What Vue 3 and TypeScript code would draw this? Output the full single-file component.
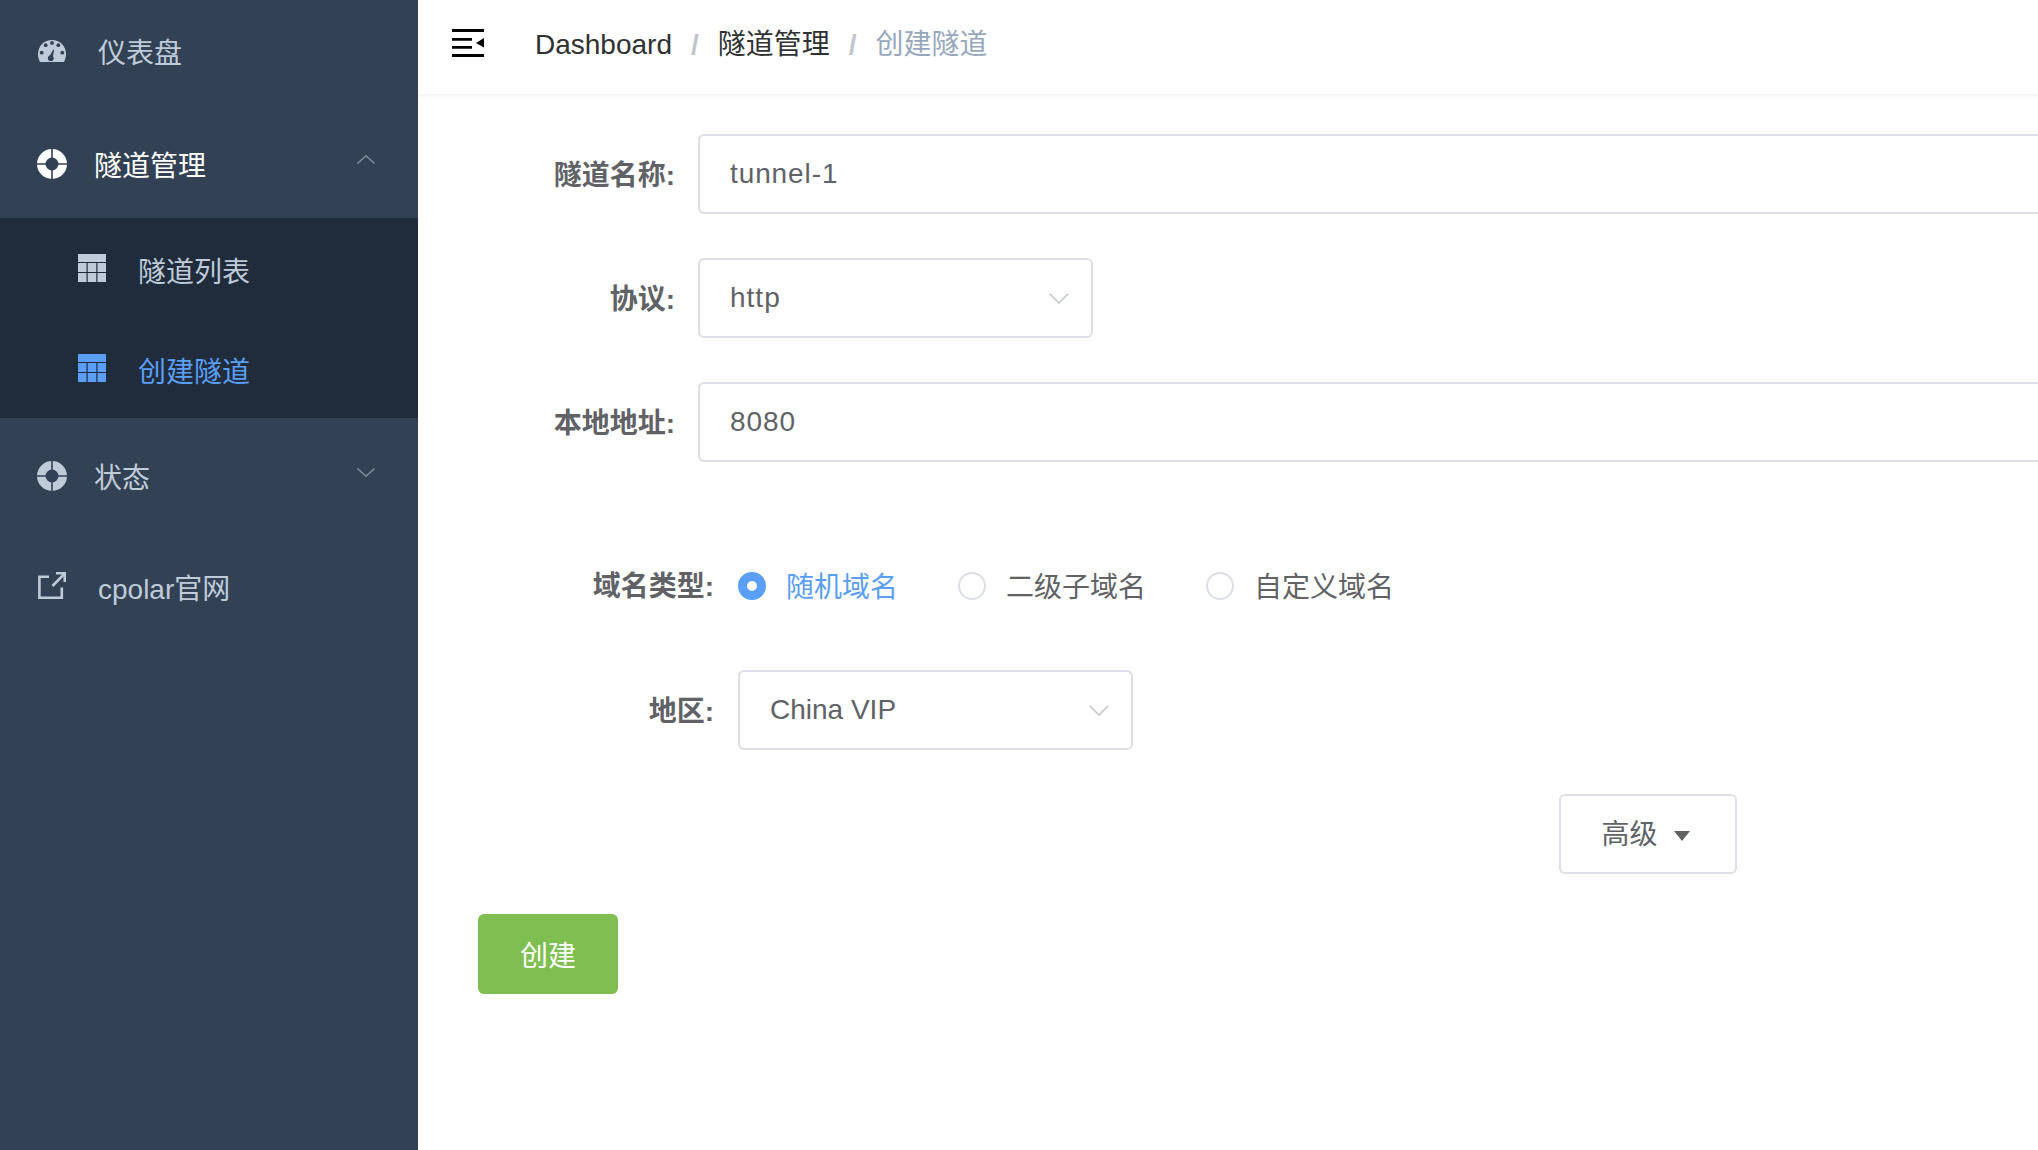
<script setup lang="ts">
import { ref } from 'vue'

const name = ref('tunnel-1')
const port = ref('8080')
const domainType = ref('随机域名')
const domainTypes = ['随机域名', '二级子域名', '自定义域名']
</script>

<template>
  <div class="layout">
    <aside class="sidebar">
      <div class="menu-item first">
        <svg class="icon dash" viewBox="0 0 28 22">
          <path fill="#bfcbd9" d="M14 0C6.300 0 0 6.200 0 13.900c0 2.900.8 5.700 2 8.100h24c1.200-2.400 2-5.200 2-8.100C28 6.200 21.700 0 14 0z"/>
          <g fill="#334155">
            <circle cx="3.700" cy="12.700" r="1.900"/><circle cx="7.700" cy="5.200" r="1.900"/><circle cx="14" cy="2.900" r="1.900"/><circle cx="20.300" cy="5.200" r="1.900"/><circle cx="24.300" cy="12.700" r="1.900"/>
            <circle cx="12.800" cy="18.200" r="2.900"/><path d="M11.300 16.800 15.200 9.500l.9.3-1.400 8.200z"/>
          </g>
        </svg>
        <span class="menu-text">仪表盘</span>
      </div>
      <div class="menu-item open">
        <svg class="icon buoy" viewBox="0 0 30 30"><path fill="#fff" fill-rule="evenodd" d="M15 0a15 15 0 1 1 0 30 15 15 0 0 1 0-30zm0 8.500a6.500 6.500 0 1 0 0 13 6.500 6.500 0 0 0 0-13z"/><path stroke="#334155" stroke-width="1.600" d="M15 0v9M15 21v9M0 15h9M21 15h9"/></svg>
        <span class="menu-text sub-title">隧道管理</span>
        <svg class="chevron" viewBox="0 0 18 9"><path fill="none" stroke="#8492a3" stroke-width="1.400" d="M.5 8.500 9 .8l8.500 7.700"/></svg>
      </div>
      <div class="submenu">
        <div class="sub-item">
          <svg class="sub-icon" viewBox="0 0 28 28"><path fill="#bfcbd9" d="M0 0h28v8H0zM0 9h8.500v9H0zM9.700 9h8.600v9H9.700zM19.500 9H28v9h-8.500zM0 19h8.500v9H0zM9.700 19h8.600v9H9.700zM19.500 19H28v9h-8.500z"/></svg>
          <span class="sub-text">隧道列表</span>
        </div>
        <div class="sub-item active">
          <svg class="sub-icon" viewBox="0 0 28 28"><path fill="#5a9ef5" d="M0 0h28v8H0zM0 9h8.500v9H0zM9.700 9h8.600v9H9.700zM19.500 9H28v9h-8.500zM0 19h8.500v9H0zM9.700 19h8.600v9H9.700zM19.500 19H28v9h-8.500z"/></svg>
          <span class="sub-text">创建隧道</span>
        </div>
      </div>
      <div class="menu-item tall">
        <svg class="icon buoy" viewBox="0 0 30 30"><path fill="#bfcbd9" fill-rule="evenodd" d="M15 0a15 15 0 1 1 0 30 15 15 0 0 1 0-30zm0 8.500a6.500 6.500 0 1 0 0 13 6.500 6.500 0 0 0 0-13z"/><path stroke="#334155" stroke-width="1.600" d="M15 0v9M15 21v9M0 15h9M21 15h9"/></svg>
        <span class="menu-text sub-title">状态</span>
        <svg class="chevron down" viewBox="0 0 18 9"><path fill="none" stroke="#8492a3" stroke-width="1.400" d="M.5.500 9 8.200 17.500.5"/></svg>
      </div>
      <div class="menu-item tall">
        <svg class="icon link" viewBox="0 0 28 28">
          <path fill="none" stroke="#bfcbd9" stroke-width="2.600" d="M11 4.700H1.400v21h22.400V15.500"/>
          <path fill="none" stroke="#bfcbd9" stroke-width="2.600" d="M14.500 14 26 2.200"/>
          <path fill="#bfcbd9" d="M18 0h10v10h-2.600V2.600H18z"/>
        </svg>
        <span class="menu-text cpolar">cpolar官网</span>
      </div>
    </aside>

    <main class="main">
      <header class="navbar">
        <svg class="hamburger" viewBox="0 0 32 28">
          <path fill="#000" d="M0 0h32v3H0zM0 9h20v2.700H0zM0 17h20v2.700H0zM0 25h32v3H0zM32 9v9.500L24 14z"/>
        </svg>
        <nav class="crumbs">
          <span class="crumb">Dashboard</span>
          <span class="sep">/</span>
          <span class="crumb">隧道管理</span>
          <span class="sep">/</span>
          <span class="crumb current">创建隧道</span>
        </nav>
      </header>

      <form class="form" @submit.prevent>
        <div class="row">
          <label class="label">隧道名称:</label>
          <input v-model="name" class="input wide" />
        </div>
        <div class="row">
          <label class="label">协议:</label>
          <div class="input select">
            <span class="spaced">http</span>
            <svg class="caret" viewBox="0 0 20 11"><path fill="none" stroke="#c0c4cc" stroke-width="1.500" d="M.8.800 10 10 19.200.8"/></svg>
          </div>
        </div>
        <div class="row">
          <label class="label">本地地址:</label>
          <input v-model="port" class="input wide" />
        </div>

        <div class="row inner radios-row">
          <label class="label">域名类型:</label>
          <div class="radios">
            <span v-for="t in domainTypes" :key="t" class="radio" :class="{ checked: t === domainType }" @click="domainType = t">
              <span class="dot"></span>{{ t }}
            </span>
          </div>
        </div>
        <div class="row inner">
          <label class="label">地区:</label>
          <div class="input select">
            <span>China VIP</span>
            <svg class="caret" viewBox="0 0 20 11"><path fill="none" stroke="#c0c4cc" stroke-width="1.500" d="M.8.800 10 10 19.200.8"/></svg>
          </div>
        </div>

        <div class="more-row">
          <button type="button" class="btn more">高级<span class="tri"></span></button>
        </div>
        <button type="submit" class="btn create">创建</button>
      </form>
    </main>
  </div>
</template>

<style>
html, body { margin: 0; overflow: hidden; }
</style>

<style scoped>
.layout {
  display: flex;
  width: 2038px;
  height: 1150px;
  overflow: hidden;
  background: #fff;
  font-family: "Liberation Sans", "Noto Sans CJK SC", sans-serif;
  font-size: 28px;
}
.sidebar { width: 418px; flex: none; background: #334155; color: #bfcbd9; }
.menu-item { display: flex; height: 110px; align-items: center; padding-left: 38px; }
.menu-item.first { height: 108px; }
.menu-item.tall { height: 114px; }
.menu-item.open { color: #fff; }
.icon { width: 28px; height: 28px; flex: none; }
.dash { height: 22px; position: relative; top: -3px; }
.buoy { width: 30px; height: 30px; margin-left: -1px; position: relative; top: 1px; }
.link { position: relative; top: -3px; }
.menu-text { margin-left: 32px; position: relative; top: -3px; }
.menu-text.sub-title { margin-left: 27px; top: 1px; }
.menu-text.cpolar { top: -2px; }
.chevron { width: 18px; height: 9px; margin-left: auto; margin-right: 43px; position: relative; top: -4px; }
.chevron.down { top: -3px; }
.submenu { background: #202c3b; }
.sub-item { display: flex; height: 100px; align-items: center; padding-left: 78px; gap: 32px; }
.sub-item.active { color: #5a9ef5; }
.sub-icon { width: 28px; height: 28px; }
.sub-text { position: relative; top: 2px; }

.main { flex: 1; min-width: 0; overflow: hidden; }
.navbar {
  display: flex;
  height: 94px;
  align-items: center;
  padding-left: 34px;
  box-shadow: 0 1px 5px rgba(0, 21, 41, 0.08);
}
.hamburger { width: 32px; height: 28px; flex: none; position: relative; top: -4px; }
.crumbs { display: flex; margin-left: 51px; color: #303133; line-height: 40px; position: relative; top: -2px; }
.sep { margin: 0 19px; color: #c0c4cc; font-weight: 700; }
.current { color: #97a8be; }

.form { padding: 40px 0 0 60px; color: #606266; }
.row { display: flex; height: 80px; align-items: center; margin-bottom: 44px; }
.label { width: 197px; flex: none; text-align: right; font-weight: 700; position: relative; top: -1px; }
.input {
  box-sizing: border-box;
  height: 80px;
  border: 2px solid #dcdfe6;
  border-radius: 6px;
  padding: 0 30px;
  background: #fff;
  color: #606266;
  font: inherit;
  outline: none;
}
.wide { width: 1500px; flex: none; margin-left: 23px; letter-spacing: 0.9px; }
.spaced { letter-spacing: 1px; }
.select {
  display: flex;
  width: 395px;
  flex: none;
  align-items: center;
  justify-content: space-between;
  margin-left: 23px;
}
.caret { width: 20px; height: 11px; margin-right: -8px; }
.inner .label { width: 236px; }
.inner .select, .radios { margin-left: 24px; }
.radios-row { margin-top: 103px; margin-bottom: 65px; height: 40px; }
.radios { display: flex; }
.radio { display: flex; align-items: center; gap: 20px; margin-right: 60px; }
.dot {
  box-sizing: border-box;
  width: 28px;
  height: 28px;
  border: 2px solid #dcdfe6;
  border-radius: 50%;
  background: #fff;
  position: relative;
  top: 1px;
}
.checked { color: #5a9ef5; }
.checked .dot { border: 9px solid #5a9ef5; }

.more-row { display: flex; }
.btn {
  box-sizing: border-box;
  height: 80px;
  border-radius: 6px;
  font: inherit;
  cursor: pointer;
}
.more {
  display: flex;
  width: 178px;
  align-items: center;
  justify-content: center;
  gap: 16px;
  margin-left: 1081px;
  padding: 0 5px 5px 0;
  border: 2px solid #dcdfe6;
  background: #fff;
  color: #606266;
}
.tri { width: 0; height: 0; border-top: 10px solid #606266; border-left: 8px solid transparent; border-right: 8px solid transparent; position: relative; top: 4px; }
.create {
  display: block;
  width: 140px;
  margin-top: 40px;
  border: 0;
  background: #7fbf52;
  color: #fff;
}
</style>
